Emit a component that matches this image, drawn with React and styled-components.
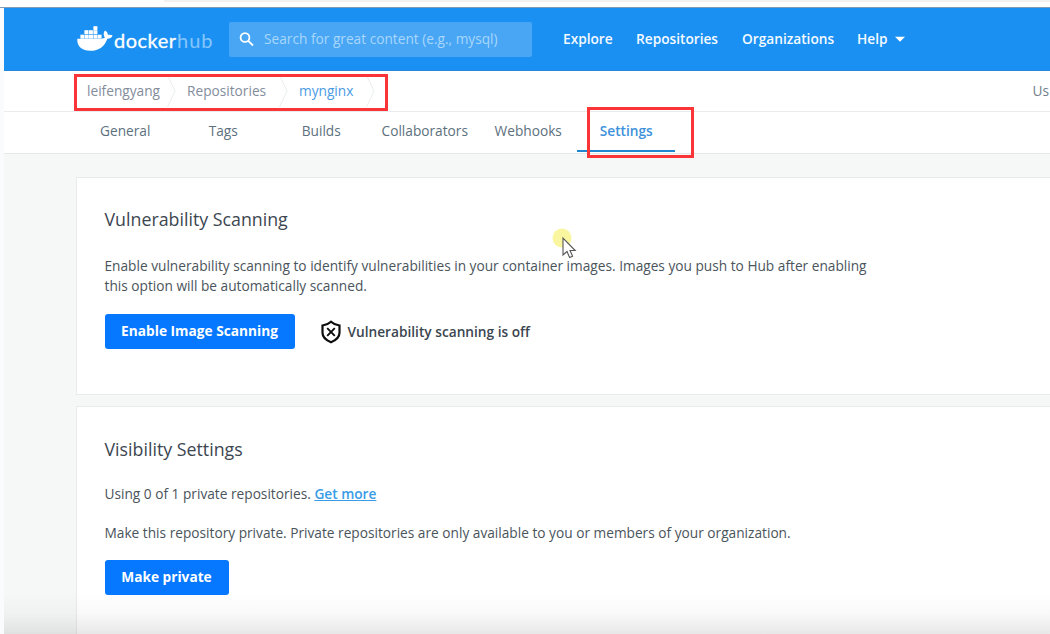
import React from "react";
import styled, { createGlobalStyle } from "styled-components";

const GlobalStyle = createGlobalStyle`
  * { box-sizing: border-box; }
  body { margin: 0; background: #fafbfd; overflow: hidden; }
  #root { font-family: "Open Sans", "Liberation Sans", sans-serif; font-size: 13.7px; color: #4a545b; }
`;

const Page = styled.div`
  position: relative;
  width: 1050px;
  height: 634px;
  padding-left: 4px;
  overflow: hidden;
  display: flex;
  flex-direction: column;
`;

const BrowserEdge = styled.div`
  flex: none;
  height: 8px;
  margin-left: -4px;
  padding-left: 164px;
  background: #fefefe;
  border-bottom: 1px solid #7f9bb5;
  &::before {
    content: "";
    display: block;
    height: 2px;
    background: #f3f0f2;
  }
`;

const Header = styled.header`
  flex: none;
  height: 63px;
  display: flex;
  align-items: center;
  padding-left: 73px;
  background: #1a90f2;
  border-bottom: 1px solid #2a86dc;
`;

const Logo = styled.div`
  display: flex;
  width: 151.5px;
  height: 36px;
`;

const Whale = styled.svg`
  flex: none;
  width: 36px;
  height: 36px;
`;

const Wordmark = styled.div`
  display: flex;
  gap: 3px;
  padding: 6px 0 0 1px;
  color: #fff;
  font: 400 20px/26px Lato, sans-serif;
`;

const Word = styled.span`
  width: ${(p) => p.$width}px;
  white-space: nowrap;
  letter-spacing: ${(p) => p.$spacing}px;
  color: ${(p) => (p.$light ? "#84c5fa" : "#fff")};
  -webkit-text-stroke: ${(p) => (p.$light ? 0.1 : 0.3)}px currentColor;
`;

const Search = styled.div`
  width: 303.5px;
  height: 35px;
  padding: 0 0 1px 10.5px;
  display: flex;
  align-items: center;
  gap: 9px;
  border-radius: 2px;
  background: #48a6f5;
  color: #a9d6fb;
  white-space: nowrap;
`;

const Nav = styled.nav`
  display: flex;
  align-items: center;
  gap: 23px;
  margin-left: 31px;
  padding-bottom: 1px;
  color: #f4faff;
  font-weight: 600;
`;

const NavItem = styled.span`
  display: flex;
  align-items: center;
  gap: 7px;
  width: ${(p) => p.$width}px;
  white-space: nowrap;
`;

const Breadcrumbs = styled.div`
  flex: none;
  height: 41px;
  display: flex;
  align-items: center;
  padding-left: 83px;
  background: #fff;
  border-bottom: 1px solid #e9ebec;
  color: #838d9b;
`;

const Crumb = styled.span`
  width: ${(p) => p.$width}px;
  padding-bottom: 1px;
  white-space: nowrap;
  color: ${(p) => (p.$active ? "#4a9be3" : "inherit")};
`;

const Separator = styled.svg`
  flex: none;
  width: 9px;
  height: 32px;
  margin-right: 11px;
`;

const Usage = styled.span`
  margin-left: auto;
  width: 17.5px;
  padding-bottom: 1px;
  white-space: nowrap;
  color: #6f7f8b;
`;

const Tabs = styled.div`
  flex: none;
  height: 42px;
  display: flex;
  padding-left: 72px;
  background: #fff;
  border-bottom: 1px solid #e6e9ea;
`;

const Tab = styled.div`
  width: ${(p) => p.$width || 98}px;
  height: 40px;
  line-height: 38px;
  padding-left: 0.5px;
  text-align: center;
  white-space: nowrap;
  color: ${(p) => (p.$active ? "#3d91da" : "#5c707d")};
  font-weight: ${(p) => (p.$active ? 600 : 400)};
  border-bottom: 2px solid ${(p) => (p.$active ? "#2087d0" : "transparent")};
`;

const Main = styled.main`
  flex: 1;
  display: flex;
  flex-direction: column;
  gap: 11px;
  padding: 23px 0 0 72px;
  background: #f6f8f8;
`;

const Card = styled.section`
  flex: none;
  height: ${(p) => p.$height}px;
  padding: ${(p) => p.$top}px 0 0 27.5px;
  background: #fff;
  border: 1px solid #e8ebec;
  border-right: 0;
`;

const Title = styled.h2`
  margin: 0;
  font-size: 17.8px;
  line-height: 26px;
  font-weight: 400;
  color: #3c4650;
`;

const Text = styled.p`
  margin: ${(p) => p.$top}px 0 0;
  line-height: 20px;
  white-space: nowrap;
`;

const Link = styled.a`
  color: #3a9ce6;
  font-weight: 600;
  text-decoration: underline;
`;

const Actions = styled.div`
  display: flex;
  align-items: center;
  margin-top: ${(p) => p.$top}px;
`;

const Button = styled.button`
  width: ${(p) => p.$width}px;
  height: 35px;
  padding: 0 0 1px;
  border: 0;
  border-radius: 3px;
  background: #0578ff;
  color: #fff;
  font: 700 13.7px/20px "Open Sans", sans-serif;
  white-space: nowrap;
`;

const Status = styled.div`
  display: flex;
  align-items: center;
  gap: 5.500px;
  margin-left: 25.500px;
  color: #3b4650;
  font-weight: 600;
  white-space: nowrap;
`;

const StatusLabel = styled.span`
  padding-bottom: 1px;
`;

const Shade = styled.div`
  position: absolute;
  left: 4px;
  right: 0;
  bottom: 0;
  height: 42px;
  background: linear-gradient(rgba(0, 0, 0, 0), rgba(0, 0, 0, 0.025) 50%, rgba(0, 0, 0, 0.09));
`;

const Highlight = styled.div`
  position: absolute;
  left: ${(p) => p.$x}px;
  top: ${(p) => p.$y}px;
  width: ${(p) => p.$w}px;
  height: ${(p) => p.$h}px;
  border: 3px solid #fb3437;
`;

const Pointer = styled.svg`
  position: absolute;
  left: 550px;
  top: 226px;
  width: 30px;
  height: 34px;
`;

const crates = [
  [20, 1], [11, 5], [15.5, 5], [20, 5],
  [7, 9.5], [11.3, 9.5], [15.6, 9.5], [20, 9.5], [24.2, 9.5],
];

function DockerWhale() {
  return (
    <Whale viewBox="0 0 36 36" fill="#fff">
      {crates.map(([x, y]) => (
        <rect key={`${x}-${y}`} x={x - 3.6} y={y + 4.2} width="4" height="3.9" />
      ))}
      <path d="M.3 17.700H24.200c1.800 0 3-.4 3.700-1.100-1.700-2-1.600-5.200.2-7 2 1.200 2.700 2.800 2.900 4.300 1.600-.4 3.400-.2 4.600.6-.8 2.200-2.800 3.200-5.300 3.200C27.600 25.400 22 29.800 13.400 29.800 4.500 29.800-.2 25 .3 17.700Z" />
    </Whale>
  );
}

function Chevron() {
  return (
    <Separator viewBox="0 0 9 32" fill="none" stroke="#e9edef">
      <path d="M.5 0 8 16 .5 32" />
    </Separator>
  );
}

export default function App() {
  return (
    <Page>
      <GlobalStyle />
      <BrowserEdge />
      <Header>
        <Logo>
          <DockerWhale />
          <Wordmark>
            <Word $width={60} $spacing={0.5}>docker</Word>
            <Word $light $width={36} $spacing={1}>hub</Word>
          </Wordmark>
        </Logo>
        <Search>
          <svg width="16" height="16" viewBox="0 0 16 16" fill="none" stroke="#fff" strokeWidth="1.800">
            <circle cx="6" cy="6.500" r="4.400" />
            <path d="m9.300 9.800 4.700 4.700" />
          </svg>
          Search for great content (e.g., mysql)
        </Search>
        <Nav>
          <NavItem $width={50}>Explore</NavItem>
          <NavItem $width={83}>Repositories</NavItem>
          <NavItem $width={92}>Organizations</NavItem>
          <NavItem>
            Help
            <svg width="10" height="6" viewBox="0 0 10 6"><path d="M0 .8h10L5 5.800Z" fill="#fff" /></svg>
          </NavItem>
        </Nav>
      </Header>
      <Breadcrumbs>
        <Crumb $width={80}>leifengyang</Crumb>
        <Chevron />
        <Crumb $width={92}>Repositories</Crumb>
        <Chevron />
        <Crumb $active $width={67}>mynginx</Crumb>
        <Chevron />
        <Usage>Us</Usage>
      </Breadcrumbs>
      <Tabs>
        <Tab>General</Tab>
        <Tab>Tags</Tab>
        <Tab>Builds</Tab>
        <Tab $width={109}>Collaborators</Tab>
        <Tab>Webhooks</Tab>
        <Tab $active>Settings</Tab>
      </Tabs>
      <Main>
        <Card $height={218} $top={28}>
          <Title>Vulnerability Scanning</Title>
          <Text $top={24}>
            Enable vulnerability scanning to identify vulnerabilities in your container images. Images you push to Hub after enabling
            <br />
            this option will be automatically scanned.
          </Text>
          <Actions $top={18}>
            <Button $width={190}>Enable Image Scanning</Button>
            <Status>
              <svg width="22" height="24" viewBox="0 0 22 24" fill="none" stroke="#0c0c0c" strokeWidth="2.200">
                <path d="M11 1.800c2.200 2.100 4.900 3.200 8.500 3.700v7.300c0 4.300-3.200 7.300-8.500 9.500-5.300-2.200-8.500-5.200-8.500-9.500V5.500C6.100 5 8.800 3.900 11 1.800Z" />
                <path d="m7.200 8.200 7.600 7.600m0-7.600-7.600 7.600" strokeWidth="1.900" />
              </svg>
              <StatusLabel>Vulnerability scanning is off</StatusLabel>
            </Status>
          </Actions>
        </Card>
        <Card $height={260} $top={29}>
          <Title>Visibility Settings</Title>
          <Text $top={22}>
            Using 0 of 1 private repositories. <Link>Get more</Link>
          </Text>
          <Text $top={19}>
            Make this repository private. Private repositories are only available to you or members of your organization.
          </Text>
          <Actions $top={17}>
            <Button $width={124}>Make private</Button>
          </Actions>
        </Card>
      </Main>
      <Shade />
      <Pointer viewBox="0 0 30 34">
        <circle cx="12" cy="12" r="9.500" fill="#f8f58e" fillOpacity=".85" />
        <path d="M13 12v17l4-3.500 2.600 6 3-1.300-2.600-5.700h5.200Z" fill="#fff" stroke="#555" strokeWidth="1.100" />
      </Pointer>
      <Highlight $x={74} $y={74} $w={314} $h={37} />
      <Highlight $x={587} $y={107} $w={107} $h={51} />
    </Page>
  );
}
